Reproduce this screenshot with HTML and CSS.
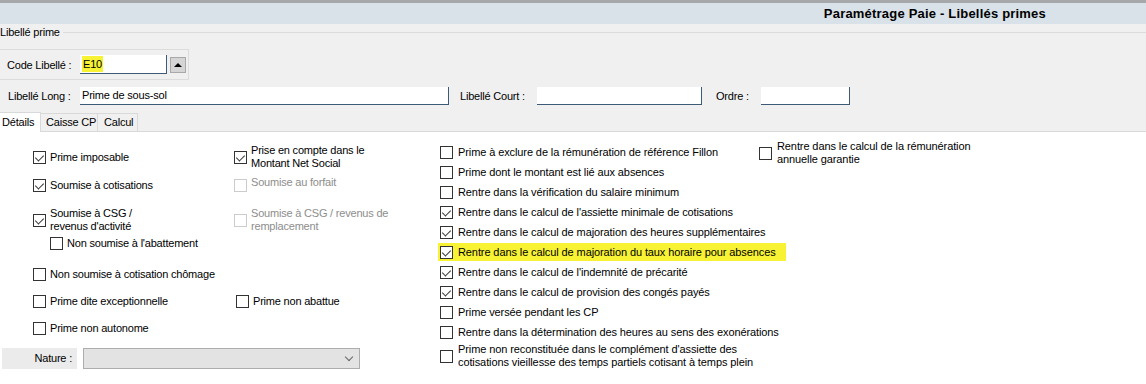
FILE: index.html
```html
<!DOCTYPE html>
<html lang="fr">
<head>
	<meta charset="UTF-8">
	<title>Paramétrage Paie - Libellés primes</title>
	<link rel="stylesheet" href="styles.css">
</head>
<body>
	<div class="titlebar">
		<span class="title">Paramétrage Paie - Libellés primes</span>
	</div>

	<div class="group-head"><span>Libellé prime</span><span class="rule"></span></div>

	<div class="code-frame">
		<label class="lbl-code">Code Libellé :</label>
		<div class="input code"><span class="marker">E10</span></div>
		<div class="spin"></div>
	</div>

	<div class="fields">
		<label class="lbl-long">Libellé Long :</label>
		<div class="input long">Prime de sous-sol</div>
		<label class="lbl-court">Libellé Court :</label>
		<div class="input court"></div>
		<label class="lbl-ordre">Ordre :</label>
		<div class="input ordre"></div>
	</div>

	<div class="tabs">
		<div class="tab active t1">Détails</div>
		<div class="tab t2">Caisse CP</div>
		<div class="tab t3">Calcul</div>
	</div>

	<div class="panel">
		<div class="left">
			<div class="row r1">
				<div class="check"><span class="box on"></span><span>Prime imposable</span></div>
				<div class="check"><span class="box on"></span><span>Prise en compte dans le<br>Montant Net Social</span></div>
			</div>
			<div class="row r2">
				<div class="check"><span class="box on"></span><span>Soumise à cotisations</span></div>
				<div class="check off"><span class="box"></span><span class="up">Soumise au forfait</span></div>
			</div>
			<div class="row r3">
				<div class="check"><span class="box on"></span><span>Soumise à CSG /<br>revenus d'activité</span></div>
				<div class="check off"><span class="box"></span><span>Soumise à CSG / revenus de<br>remplacement</span></div>
			</div>
			<div class="row r4">
				<div class="check sub"><span class="box"></span><span>Non soumise à l'abattement</span></div>
			</div>
			<div class="row r5">
				<div class="check"><span class="box"></span><span>Non soumise à cotisation chômage</span></div>
			</div>
			<div class="row r6">
				<div class="check"><span class="box"></span><span>Prime dite exceptionnelle</span></div>
				<div class="check shift"><span class="box"></span><span>Prime non abattue</span></div>
			</div>
			<div class="row r7">
				<div class="check"><span class="box"></span><span>Prime non autonome</span></div>
			</div>
			<div class="nature">
				<label class="lbl-nature">Nature :</label>
				<div class="select"><span class="chevron"></span></div>
			</div>
		</div>

		<div class="col3">
			<div class="check"><span class="box"></span><span>Prime à exclure de la rémunération de référence Fillon</span></div>
			<div class="check"><span class="box"></span><span>Prime dont le montant est lié aux absences</span></div>
			<div class="check"><span class="box"></span><span>Rentre dans la vérification du salaire minimum</span></div>
			<div class="check"><span class="box on"></span><span>Rentre dans le calcul de l'assiette minimale de cotisations</span></div>
			<div class="check"><span class="box on"></span><span>Rentre dans le calcul de majoration des heures supplémentaires</span></div>
			<div class="check"><span class="hl"><span class="box on"></span><span>Rentre dans le calcul de majoration du taux horaire pour absences</span></span></div>
			<div class="check"><span class="box on"></span><span>Rentre dans le calcul de l'indemnité de précarité</span></div>
			<div class="check"><span class="box on"></span><span>Rentre dans le calcul de provision des congés payés</span></div>
			<div class="check"><span class="box"></span><span>Prime versée pendant les CP</span></div>
			<div class="check"><span class="box"></span><span>Rentre dans la détermination des heures au sens des exonérations</span></div>
			<div class="check tall"><span class="box"></span><span>Prime non reconstituée dans le complément d'assiette des<br>cotisations vieillesse des temps partiels cotisant à temps plein</span></div>
		</div>

		<div class="col4">
			<div class="check"><span class="box"></span><span>Rentre dans le calcul de la rémunération<br>annuelle garantie</span></div>
		</div>
	</div>
</body>
</html>
```

FILE: styles.css
```css
*{
	margin: 0;
	padding: 0;
	box-sizing: border-box;
}
body{
	width: 1146px;
	height: 384px;
	overflow: hidden;
	background: #f0f0f0;
	font-family: "Liberation Sans", Arial, sans-serif;
	font-size: 11px;
	letter-spacing: -0.2px;
	color: #000;
}

/* barre de titre */
.titlebar{
	height: 24px;
	border-top: 3px solid #a6a8a9;
	background: #d8e2e8;
	display: flex;
	align-items: center;
	justify-content: flex-end;
	padding-right: 100px;
}
.title{
	font-weight: bold;
	font-size: 13px;
	letter-spacing: 0.2px;
}

/* groupe libellé */
.group-head{
	height: 16px;
	display: flex;
	align-items: center;
}
.group-head .rule{
	flex: 1;
	border-top: 1px solid #dcdcdc;
	margin-left: 3px;
}
.code-frame{
	margin-top: 9px;
	width: 189px;
	height: 31px;
	border: 1px solid #dcdcdc;
	border-left: none;
	display: flex;
	align-items: center;
	padding-left: 7px;
}
.lbl-code{
	width: 73px;
}
.input{
	background: #fff;
	border-right: 1px solid #3d5b77;
	border-bottom: 1px solid #3d5b77;
	height: 18px;
	line-height: 17px;
	padding-left: 2px;
	white-space: nowrap;
}
.input.code{
	width: 87px;
	height: 19px;
	line-height: 19px;
}
.marker{
	background: #f7f234;
	padding: 2px 1px 2px 1px;
}
.spin{
	width: 16px;
	height: 16px;
	margin-left: 3px;
	background: #d5d5d5;
	border: 1px solid #a9a9a9;
	display: flex;
	align-items: center;
	justify-content: center;
}
.spin::after{
	content: "";
	border-left: 4px solid transparent;
	border-right: 4px solid transparent;
	border-bottom: 4px solid #000;
}

.fields{
	margin-top: 7px;
	display: flex;
	align-items: center;
	padding-left: 8px;
}
.lbl-long{
	width: 72px;
}
.input.long{
	width: 369px;
}
.lbl-court{
	margin-left: 11px;
	width: 77px;
}
.input.court{
	width: 165px;
}
.lbl-ordre{
	margin-left: 14px;
	width: 45px;
}
.input.ordre{
	width: 89px;
}

/* onglets */
.tabs{
	margin-top: 8px;
	height: 19px;
	display: flex;
	align-items: flex-end;
	border-bottom: 1px solid #d9d9d9;
}
.tab{
	height: 18px;
	line-height: 17px;
	border: 1px solid #d9d9d9;
	border-bottom: none;
	border-left: none;
	padding-left: 5px;
}
.tab.active{
	height: 20px;
	margin-bottom: -1px;
	background: #fff;
	padding-left: 2px;
	line-height: 18px;
}
.t1{ width: 41px; }
.t2{ width: 57px; }
.t3{ width: 40px; padding-left: 6px; }

/* contenu */
.panel{
	height: 253px;
	background: #fff;
	display: flex;
	white-space: nowrap;
}
.left{
	width: 440px;
	flex: none;
	padding-left: 33px;
}
.row{
	display: grid;
	grid-template-columns: 201px 1fr;
	align-items: center;
}
.r1{ margin-top: 11px; height: 28px; }
.r2{ height: 28px; }
.r3{ margin-top: 7px; height: 28px; }
.r4{ margin-top: 2px; height: 14px; }
.r5{ margin-top: 17px; height: 14px; }
.r6{ margin-top: 13px; height: 14px; }
.r7{ margin-top: 13px; height: 14px; }

.check{
	display: flex;
	align-items: center;
	gap: 4px;
	line-height: 13px;
}
.check .box{
	width: 13px;
	height: 13px;
	flex: none;
	border: 1px solid #333;
	background: #fff;
	position: relative;
}
.check .box.on::after{
	content: "";
	position: absolute;
	left: 3px;
	top: 1px;
	width: 4px;
	height: 7px;
	border-right: 1px solid #333;
	border-bottom: 1px solid #333;
	transform: rotate(45deg);
}
.check.off{
	color: #8d8d8d;
}
.check.off .box{
	border-color: #cccccc;
}
.check.off .up{
	margin-top: -6px;
}
.check.sub{
	margin-left: 17px;
}
.check.shift{
	margin-left: 2px;
}

.nature{
	margin-top: 13px;
	margin-left: -31px;
	display: flex;
	height: 21px;
}
.lbl-nature{
	width: 75px;
	background: #ebebeb;
	text-align: right;
	padding-right: 5px;
	line-height: 21px;
}
.select{
	margin-left: 6px;
	width: 277px;
	background: #e3e3e3;
	border: 1px solid #adadad;
	display: flex;
	align-items: center;
	justify-content: flex-end;
	padding-right: 7px;
}
.chevron{
	width: 6px;
	height: 6px;
	border-right: 1px solid #666;
	border-bottom: 1px solid #666;
	transform: rotate(45deg);
	margin-top: -4px;
}

.col3{
	width: 319px;
	flex: none;
	margin-top: 10px;
	letter-spacing: -0.1px;
}
.col3 .check{
	height: 20px;
	gap: 5px;
}
.col3 .check.tall{
	height: 28px;
}
.hl{
	display: flex;
	align-items: center;
	gap: 5px;
	height: 18px;
	margin-left: -2px;
	padding: 0 10px 0 2px;
	background: #f7f234;
}
.col4{
	margin-top: 8px;
	letter-spacing: -0.1px;
}
.col4 .check{
	gap: 5px;
}
```
